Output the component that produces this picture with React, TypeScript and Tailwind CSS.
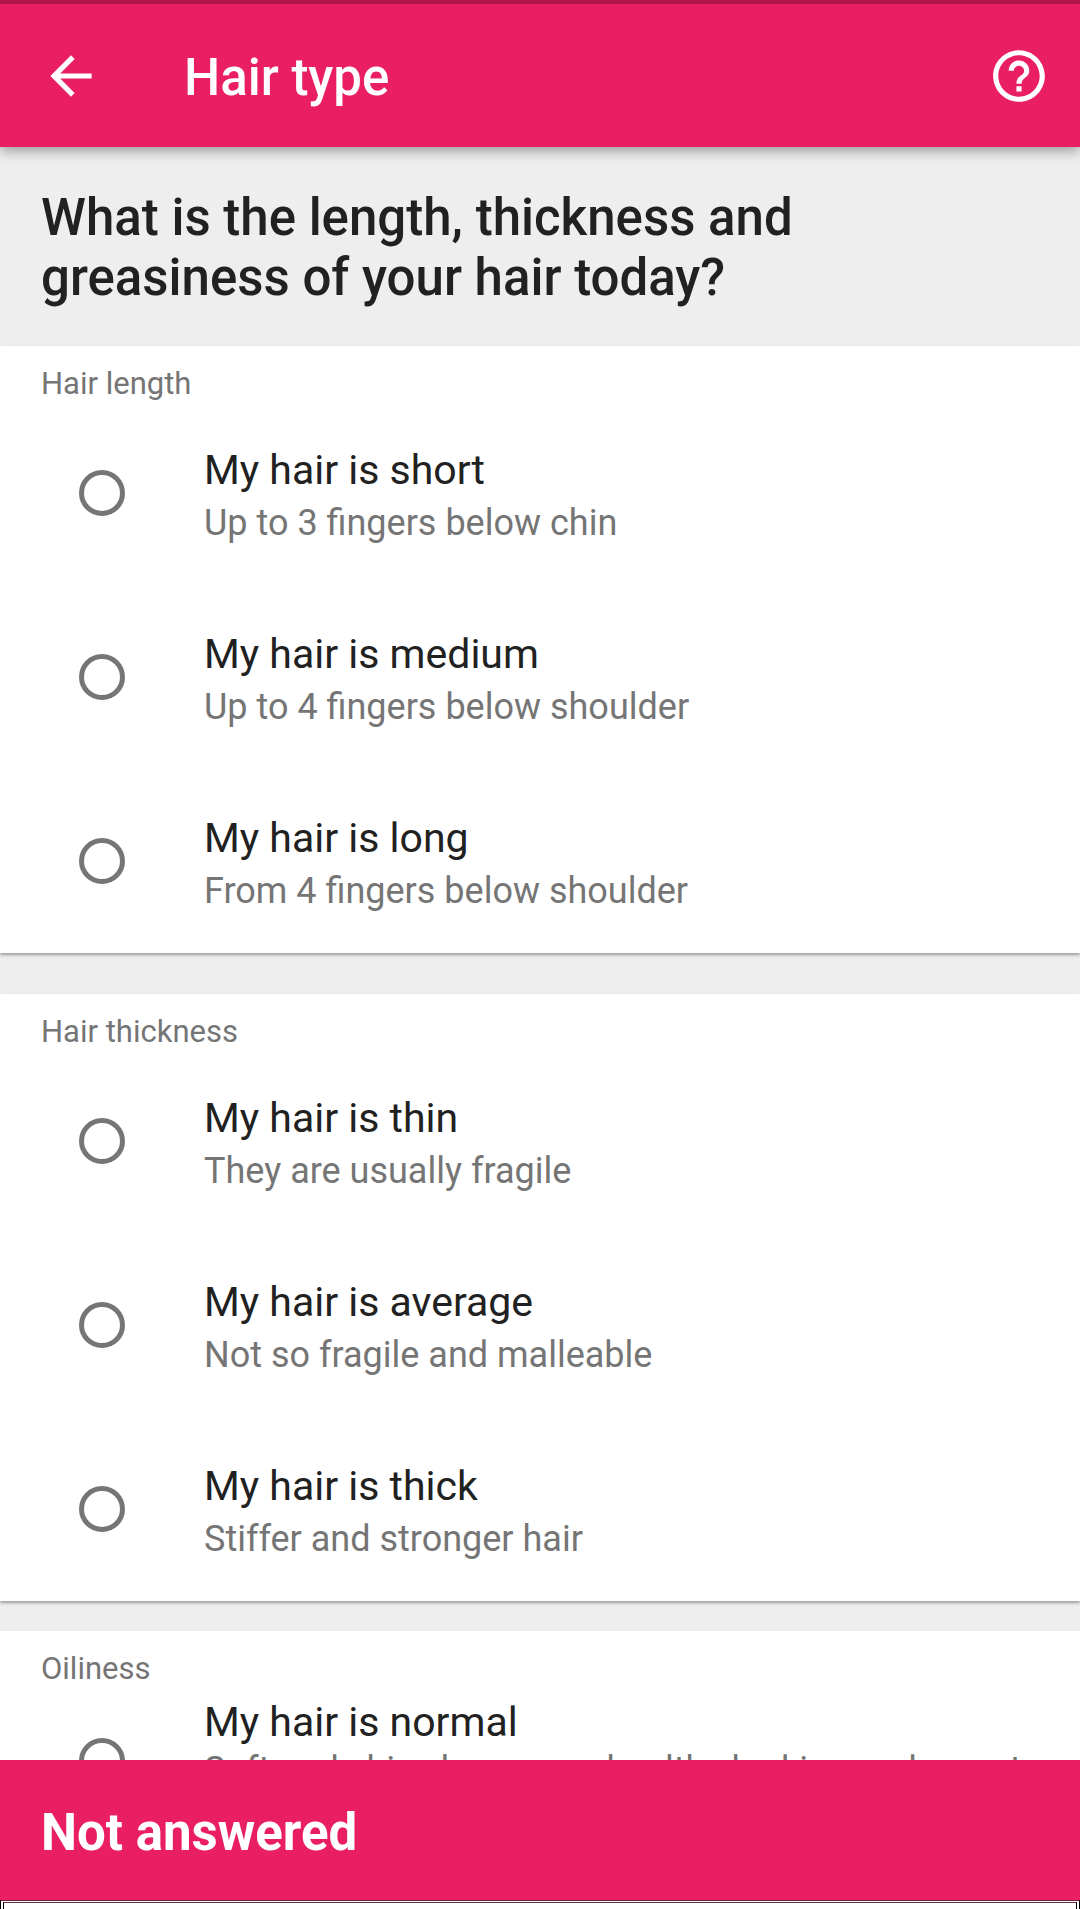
import { useState } from "react";

type Option = { title: string; detail: string };
type Group = { name: string; label: string; options: Option[] };

const groups: Group[] = [
  {
    name: "length",
    label: "Hair length",
    options: [
      { title: "My hair is short", detail: "Up to 3 fingers below chin" },
      { title: "My hair is medium", detail: "Up to 4 fingers below shoulder" },
      { title: "My hair is long", detail: "From 4 fingers below shoulder" },
    ],
  },
  {
    name: "thickness",
    label: "Hair thickness",
    options: [
      { title: "My hair is thin", detail: "They are usually fragile" },
      { title: "My hair is average", detail: "Not so fragile and malleable" },
      { title: "My hair is thick", detail: "Stiffer and stronger hair" },
    ],
  },
];

const oiliness: Option = {
  title: "My hair is normal",
  detail: "Soft and shiny has some healthy looking and even to touch",
};

function OptionRow({
  option,
  name,
  checked,
  onSelect,
  dense = false,
}: {
  option: Option;
  name: string;
  checked: boolean;
  onSelect: () => void;
  dense?: boolean;
}) {
  return (
    <label className="flex h-[136px] shrink-0 cursor-pointer items-center">
      <span className="flex w-[204px] shrink-0 justify-start pl-[79px]">
        <input
          type="radio"
          name={name}
          checked={checked}
          onChange={onSelect}
          className="size-[46px] appearance-none rounded-full border-[5px] border-[#757575] bg-white checked:border-[14px] checked:border-[#e91e63]"
        />
      </span>
      <span className="flex min-w-0 flex-col pt-1.5 pr-6">
        <span className="text-[41px] leading-[54px] text-[#212121]">{option.title}</span>
        <span
          className={
            dense
              ? "text-[36px] leading-[42px] text-[#757575]"
              : "text-[36px] leading-[52px] text-[#757575]"
          }
        >
          {option.detail}
        </span>
      </span>
    </label>
  );
}

export default function App() {
  const [answers, setAnswers] = useState<Record<string, string>>({});
  const select = (name: string, title: string) =>
    setAnswers((current) => ({ ...current, [name]: title }));

  return (
    <div className="flex h-screen flex-col overflow-hidden bg-[#eeeeee] font-[Roboto,sans-serif]">
      <header className="z-10 flex h-[147px] shrink-0 items-center border-t-4 border-[#b0164a] bg-[#e91e63] pr-[30px] pl-10 text-white shadow-[0_4px_12px_rgba(0,0,0,0.35)]">
        <button type="button" aria-label="Back" className="size-[62px]">
          <svg viewBox="0 0 24 24" fill="currentColor" className="size-full">
            <path d="M20 11H7.830l5.590-5.590L12 4l-8 8 8 8 1.410-1.410L7.830 13H20v-2z" />
          </svg>
        </button>
        <h1 className="ml-[82px] flex-1 pt-1 text-[51px] leading-[60px] font-medium">Hair type</h1>
        <button type="button" aria-label="Help" className="size-[62px]">
          <svg viewBox="0 0 24 24" fill="currentColor" className="size-full">
            <path d="M11 18h2v-2h-2v2zm1-16C6.480 2 2 6.480 2 12s4.480 10 10 10 10-4.480 10-10S17.520 2 12 2zm0 18c-4.410 0-8-3.590-8-8s3.590-8 8-8 8 3.590 8 8-3.590 8-8 8zm0-14c-2.210 0-4 1.790-4 4h2c0-1.100.9-2 2-2s2 .9 2 2c0 2-3 1.750-3 5h2c0-2.250 3-2.500 3-5 0-2.210-1.790-4-4-4z" />
          </svg>
        </button>
      </header>

      <main className="min-h-0 flex-1 overflow-hidden">
        <h2 className="max-w-[900px] px-[41px] pt-[41px] pb-[38px] text-[51px] leading-[60px] font-medium text-[#212121]">
          What is the length, thickness and greasiness of your hair today?
        </h2>

        {groups.map((group, index) => (
          <fieldset
            key={group.name}
            className={
              index === 0
                ? "mb-[41px] bg-white shadow-[0_2px_3px_rgba(0,0,0,0.35)]"
                : "mb-[30px] bg-white shadow-[0_2px_3px_rgba(0,0,0,0.35)]"
            }
          >
            <legend className="float-left w-full px-[41px] pt-[14px] text-[31px] leading-[48px] text-[#757575]">
              {group.label}
            </legend>
            <div className="clear-both flex flex-col gap-12 pt-[17px] pb-6">
              {group.options.map((option) => (
                <OptionRow
                  key={option.title}
                  option={option}
                  name={group.name}
                  checked={answers[group.name] === option.title}
                  onSelect={() => select(group.name, option.title)}
                />
              ))}
            </div>
          </fieldset>
        ))}

        <fieldset className="bg-white">
          <legend className="float-left w-full px-[41px] pt-[14px] text-[31px] leading-[48px] text-[#757575]">
            Oiliness
          </legend>
          <div className="clear-both">
            <OptionRow
              dense
              option={oiliness}
              name="oiliness"
              checked={answers.oiliness === oiliness.title}
              onSelect={() => select("oiliness", oiliness.title)}
            />
          </div>
        </fieldset>
      </main>

      <footer className="flex h-[140px] shrink-0 items-center bg-[#e91e63] px-[41px] pt-1.5 text-[51px] leading-[60px] font-bold text-white">
        Not answered
      </footer>
      <div className="h-[9px] shrink-0 border-x border-t border-x-black border-t-[#70203c] bg-white px-0.5 pt-px">
        <div className="h-full border-x border-t border-x-black border-t-[#553344]" />
      </div>
    </div>
  );
}
